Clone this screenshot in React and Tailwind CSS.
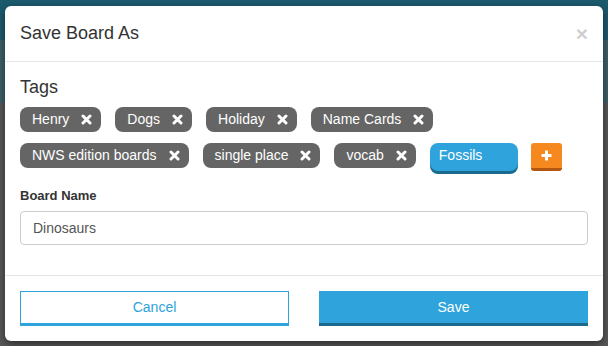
import { useState } from 'react'

const tagRows = [
  ['Henry', 'Dogs', 'Holiday', 'Name Cards'],
  ['NWS edition boards', 'single place', 'vocab'],
]

function RemoveIcon() {
  return (
    <svg width="11" height="11" viewBox="0 0 11 11" className="shrink-0">
      <path d="M2 2 L9 9 M9 2 L2 9" stroke="#ffffff" strokeWidth="3" strokeLinecap="round" />
    </svg>
  )
}

function Tag({ label }) {
  return (
    <div className="flex h-[25px] items-center gap-3 rounded-lg bg-[#656565] pl-3 pr-[9px] text-[14px] text-white">
      <span>{label}</span>
      <RemoveIcon />
    </div>
  )
}

export default function App() {
  const [name, setName] = useState('Dinosaurs')

  return (
    <div
      className="h-[346px] w-[608px] overflow-hidden bg-[linear-gradient(to_bottom,#1c5a6e_0px,#1c5a6e_40px,#3f6068_40px,#3f6068_103px,#585858_103px)] pt-[6px] pl-[5px]"
      style={{ fontFamily: '"Liberation Sans", Arial, sans-serif' }}
    >
      <div className="w-[598px] rounded-md bg-white shadow-[0_3px_9px_rgba(0,0,0,0.5)]">
        {/* Header */}
        <div className="flex h-[56px] items-center justify-between border-b border-[#e5e5e5] px-[15px]">
          <h4 className="text-[18px] text-[#333]">Save Board As</h4>
          <span className="text-[21px] font-bold leading-none text-[#cfcfcf]">×</span>
        </div>

        {/* Body */}
        <div className="px-[15px] pt-[12px] pb-[30px]">
          <p className="text-[18px] leading-[26px] text-[#333]">Tags</p>
          <div className="mt-[7px] flex flex-col gap-[11px]">
            <div className="flex gap-[14px]">
              {tagRows[0].map((t) => (
                <Tag key={t} label={t} />
              ))}
            </div>
            <div className="flex gap-[14px]">
              {tagRows[1].map((t) => (
                <Tag key={t} label={t} />
              ))}
              <div className="flex h-[28px] w-[88px] items-start rounded-lg bg-[#2ea3dc] pl-[9px] pt-[3px] text-[14px] leading-[19px] text-white shadow-[0_3px_0_#1b6a8e]">
                Fossils
              </div>
              <button className="-ml-px flex h-[28px] w-[31px] items-center justify-center rounded-[3px] border-b-[3px] border-[#b3560f] bg-[#f5891f]">
                <svg width="11" height="11" viewBox="0 0 11 11">
                  <path d="M5.5 0.5 V10.5 M0.5 5.5 H10.5" stroke="#ffffff" strokeWidth="3" />
                </svg>
              </button>
            </div>
          </div>

          <label className="mt-[16px] block text-[13px] font-bold leading-[18px] text-[#333]">Board Name</label>
          <input
            type="text"
            value={name}
            onChange={(e) => setName(e.target.value)}
            className="mt-[6px] block h-[34px] w-full rounded-[4px] border border-[#ccc] px-3 text-[14px] text-[#555] outline-none"
          />
        </div>

        {/* Footer */}
        <div className="grid grid-cols-2 gap-[30px] border-t border-[#e5e5e5] px-[15px] pt-[15px] pb-[15px]">
          <button className="h-[35px] border border-b-[3px] border-[#2ea3dc] bg-white text-[14px] text-[#2ea3dc]">
            Cancel
          </button>
          <button className="h-[35px] border-b-[3px] border-[#1b6a8e] bg-[#2ea3dc] text-[14px] text-white">
            Save
          </button>
        </div>
      </div>
    </div>
  )
}
